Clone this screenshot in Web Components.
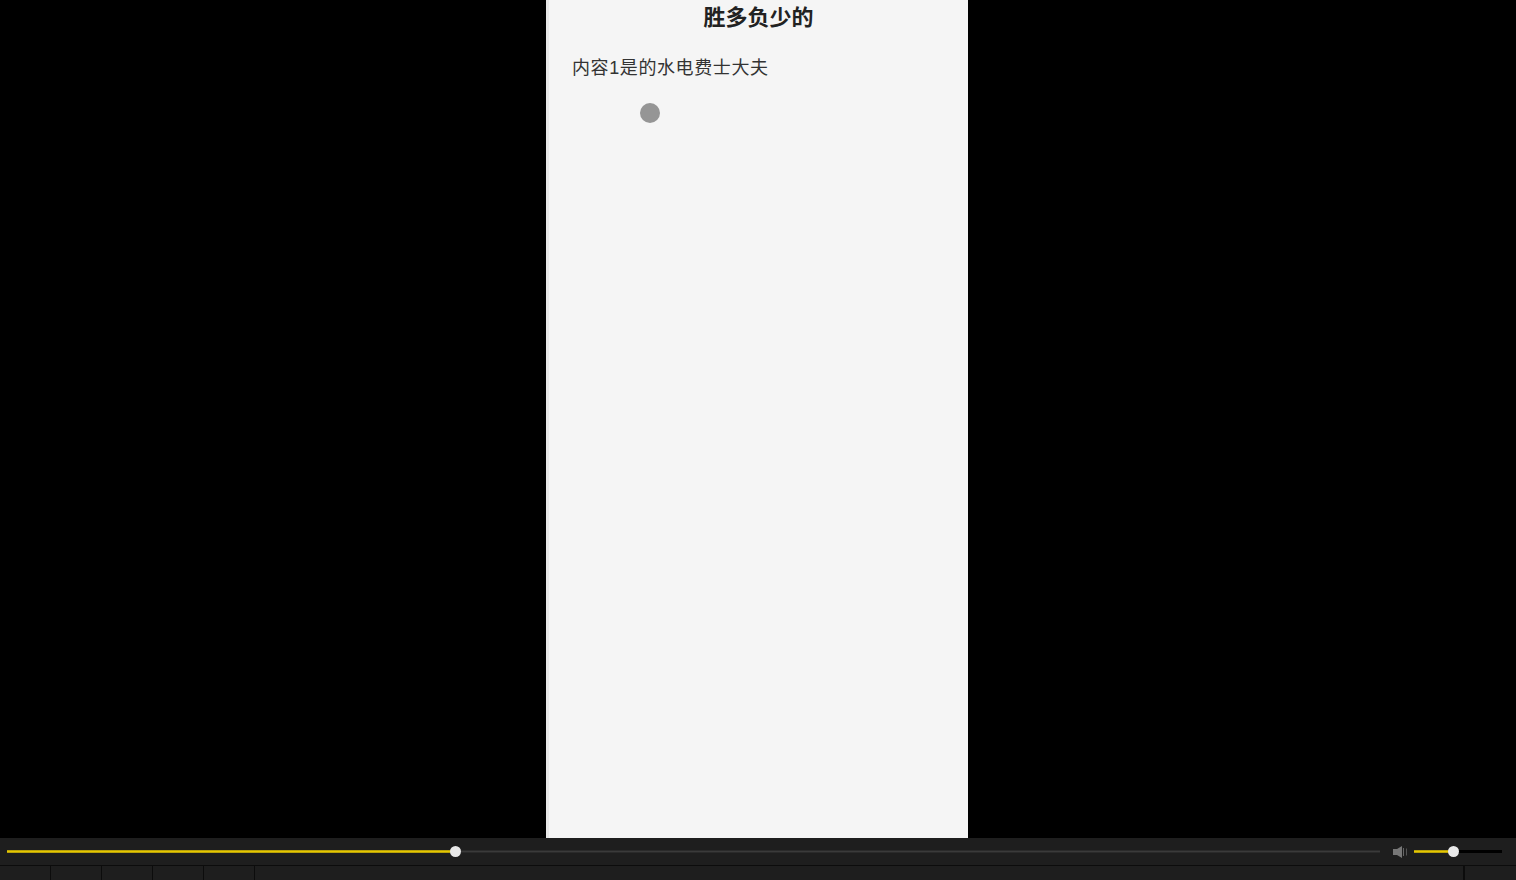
<!DOCTYPE html>
<html><head><meta charset="utf-8"><style>
html,body{margin:0;height:100%;background:#000;overflow:hidden}
body{display:flex;flex-direction:column;height:880px}
</style></head><body>
<video-stage>
  <phone-page heading="胜多负少的" body="内容1是的水电费士大夫"></phone-page>
</video-stage>
<player-bar></player-bar>
<script>
class VideoStage extends HTMLElement{constructor(){super();this.attachShadow({mode:'open'}).innerHTML=`<style>:host{display:flex;justify-content:center;height:838px;background:#000;padding-right:2px}</style><slot></slot>`}}
class PhonePage extends HTMLElement{constructor(){super();const h=this.getAttribute('heading'),b=this.getAttribute('body');this.attachShadow({mode:'open'}).innerHTML=`<style>
:host{display:block;box-sizing:border-box;width:422px;height:838px;background:#f5f5f5;border-left:3px solid #e8e8e8;overflow:hidden;font-family:"Liberation Sans","Noto Sans CJK SC",sans-serif;color:#222}
h1{margin:0;height:33px;line-height:35px;text-align:center;font-size:22px;font-weight:700;color:#222}
p{margin:0;padding:23px 0 0 23px;height:24px;line-height:24px;font-size:18px;letter-spacing:.6px;color:#333}
.dot{width:20px;height:20px;border-radius:50%;background:#959595;margin:23px 0 0 91px}
</style><h1>${h}</h1><p>${b}</p><div class="dot"></div>`}}
class MediaSlider extends HTMLElement{constructor(){super();const v=this.getAttribute('value');const t=this.getAttribute('track');this.attachShadow({mode:'open'}).innerHTML=`<style>
:host{display:block;position:relative;height:3px}
.track{position:absolute;inset:0;background:${t}}
.fill{position:absolute;left:0;top:0;bottom:0;width:${v}px;background:linear-gradient(#8f7f10,#e6c700 35%,#e6c700 65%,#8f7f10)}
.knob{position:absolute;left:${v}px;top:50%;width:11px;height:11px;margin:-5.5px 0 0 -5.5px;border-radius:50%;background:#e9e9e9}
</style><div class="track"></div><div class="fill"></div><div class="knob"></div>`}}
class PlayerBar extends HTMLElement{constructor(){super();this.attachShadow({mode:'open'}).innerHTML=`<style>
:host{display:block;height:42px;background:#1e1e1e}
.top{display:flex;align-items:center;height:28px;padding:0 14px 0 7px;border-bottom:1px solid #0c0c0c;box-sizing:border-box}
media-slider.main{flex:1}
svg{display:block;margin:0 6px 0 12px;flex:none}
media-slider.vol{width:88px;flex:none}
.tabs{display:flex;height:14px}
.tab{box-sizing:border-box;width:51px;border-right:1px solid #0c0c0c}
.tab.grow{flex:1}
.tab.last{width:52px;border-right:0;border-left:1px solid #0c0c0c}
</style>
<div class="top"><media-slider class="main" value="448" track="linear-gradient(#222,#3a3a3a 50%,#222)"></media-slider>
<svg width="16" height="14" viewBox="0 0 16 14"><path d="M1 4h4L10 1v12L5 10H1z" fill="#777"/><path d="M11.500 3v8" stroke="#666" fill="none"/><path d="M14.500 3.500v7" stroke="#555" fill="none"/></svg>
<media-slider class="vol" value="39" track="#000"></media-slider></div>
<div class="tabs"><div class="tab"></div><div class="tab"></div><div class="tab"></div><div class="tab"></div><div class="tab"></div><div class="tab grow"></div><div class="tab last"></div></div>`}}
customElements.define('video-stage',VideoStage);
customElements.define('phone-page',PhonePage);
customElements.define('media-slider',MediaSlider);
customElements.define('player-bar',PlayerBar);
</script>
</body></html>
